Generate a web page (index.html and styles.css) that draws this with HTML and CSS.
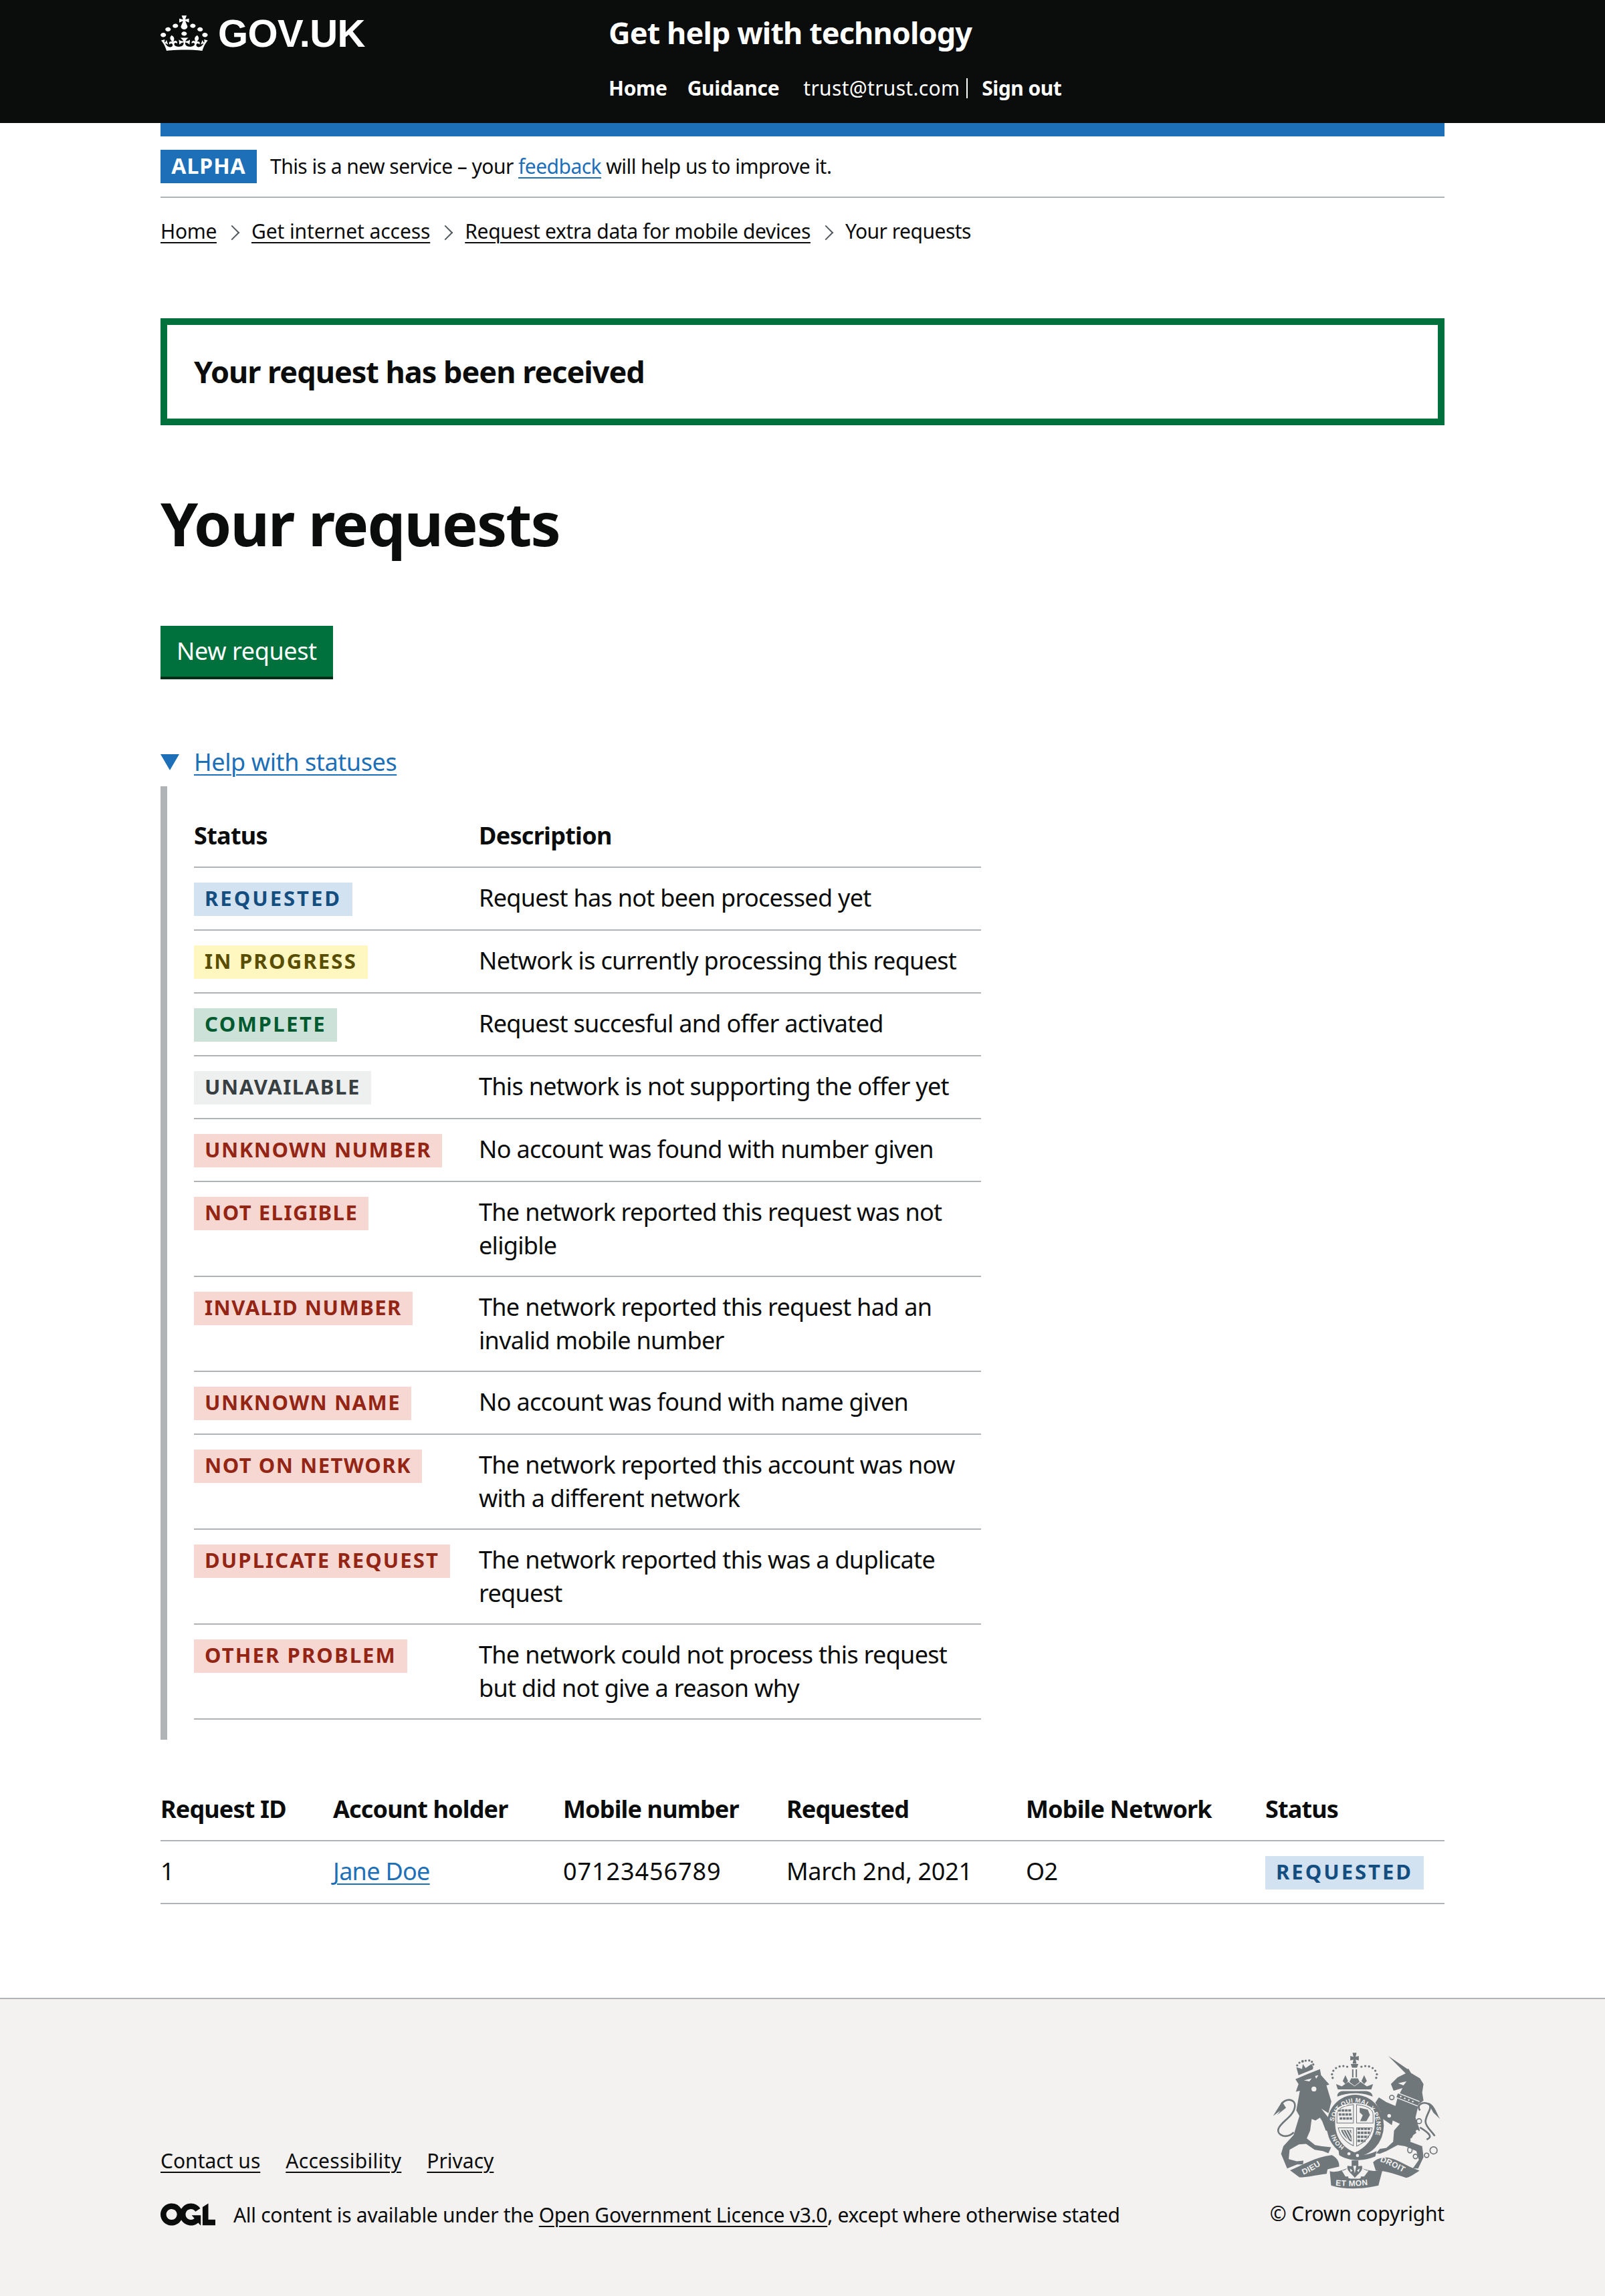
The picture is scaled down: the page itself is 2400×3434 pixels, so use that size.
FILE: index.html
```html
<!DOCTYPE html>
<html lang="en">
<head>
<meta charset="utf-8">
<title>Your requests - Get help with technology</title>
<link rel="stylesheet" href="styles.css">
</head>
<body>
<header class="site-header">
  <div class="header-inner">
    <div class="header-logo">
      <svg class="crown" viewBox="0 -0.2 32.6 30.2" preserveAspectRatio="none" aria-hidden="true"><path fill="#fff" fill-rule="evenodd" d="M22.6 10.4c-1 .4-2-.1-2.4-1-.4-.9.1-2 1-2.4.9-.4 2 .1 2.4 1s-.1 2-1 2.4m-5.9 6.7c-.9.4-2-.1-2.4-1-.4-.9.1-2 1-2.4.9-.4 2 .1 2.4 1s-.1 2-1 2.4m10.8-3.7c-1 .4-2-.1-2.4-1-.4-.9.1-2 1-2.4.9-.4 2 .1 2.4 1s0 2-1 2.4m3.3 4.8c-1 .4-2-.1-2.4-1-.4-.9.1-2 1-2.4.9-.4 2 .1 2.4 1s-.1 2-1 2.4M17 4.7l2.3 1.2V2.5l-2.3.7-.2-.2.9-3h-3.4l.9 3-.2.2c-.1.1-2.3-.7-2.3-.7v3.4L15 4.7c.1.1.1.2.2.2l-1.3 4c-.1.2-.1.4-.1.6 0 1.1.8 2 1.9 2.2h.7c1-.2 1.9-1.1 1.9-2.2 0-.2 0-.4-.1-.6l-1.3-4c-.1-.1 0-.2.1-.2m-7.6 5.7c.9.4 2-.1 2.4-1 .4-.9-.1-2-1-2.4-.9-.4-2 .1-2.4 1s0 2 1 2.4m-5 3c.9.4 2-.1 2.4-1 .4-.9-.1-2-1-2.4-.9-.4-2 .1-2.4 1s.1 2 1 2.4m-3.2 4.8c.9.4 2-.1 2.4-1 .4-.9-.1-2-1-2.4-.9-.4-2 .1-2.4 1s0 2 1 2.4m14.8 11c4.4 0 8.6.3 12.3.8 1.1-4.5 2.4-7 3.7-8.8l-2.5-.9c.2 1.3.3 1.9 0 2.7-.4-.4-.8-1.1-1.1-2.3l-1.2 4c.7-.5 1.3-.8 2-.9-1.1 2.5-2.6 3.1-3.5 3-1.1-.2-1.7-1.2-1.5-2.1.3-1.2 1.5-1.5 2.1-.1 1.1-2.3-.8-3-2-2.3 1.9-1.9 2.1-3.5.6-5.6-2.1 1.6-2.1 3.2-1.2 5.5-1.2-1.4-3.2-.6-2.5 1.6.9-1.4 2.1-.5 1.9.8-.2 1.1-1.7 2.1-3.5 1.9-2.7-.2-2.9-2.1-2.9-3.6.7-.1 1.9.5 2.9 1.9l.4-4.3c-1.1 1.1-2.1 1.4-3.2 1.4.4-1.2 2.1-3 2.1-3h-5.4s1.7 1.9 2.1 3c-1.1 0-2.1-.2-3.2-1.4l.4 4.3c1-1.4 2.2-2 2.9-1.9-.1 1.5-.2 3.4-2.9 3.6-1.9.2-3.4-.8-3.5-1.9-.2-1.3 1-2.2 1.9-.8.7-2.3-1.2-3-2.5-1.6.9-2.2.9-3.9-1.2-5.5-1.5 2-1.3 3.7.6 5.6-1.2-.7-3.1 0-2 2.3.6-1.4 1.8-1.1 2.1.1.2.9-.3 1.9-1.5 2.1-.9.2-2.4-.5-3.5-3 .6 0 1.2.3 2 .9l-1.2-4c-.3 1.1-.7 1.9-1.1 2.3-.3-.8-.2-1.4 0-2.7l-2.5.9c1.3 1.9 2.7 4.3 3.7 8.8 3.7-.5 7.9-.8 12.3-.8"/></svg>
      <a class="logotype" href="#">GOV.UK</a>
    </div>
    <div class="header-content">
      <a class="service-name" href="#">Get help with technology</a>
      <nav class="header-nav">
        <a class="nav-link" href="#">Home</a>
        <a class="nav-link" href="#">Guidance</a>
        <span class="nav-user">trust@trust.com</span>
        <a class="nav-link nav-signout" href="#">Sign out</a>
      </nav>
    </div>
  </div>
</header>

<div class="page">
  <div class="phase-banner">
    <strong class="phase-tag">ALPHA</strong>
    <span class="phase-text">This is a new service – your <a class="link" href="#">feedback</a> will help us to improve it.</span>
  </div>

  <ol class="breadcrumbs">
    <li class="crumb"><a class="crumb-link" href="#">Home</a></li>
    <li class="crumb crumb-loose"><a class="crumb-link" href="#">Get internet access</a></li>
    <li class="crumb"><a class="crumb-link" href="#">Request extra data for mobile devices</a></li>
    <li class="crumb crumb-tight">Your requests</li>
  </ol>

  <main class="main">
    <div class="panel">Your request has been received</div>
    <h1 class="page-title">Your requests</h1>
    <a class="button" href="#">New request</a>

    <details class="details" open>
      <summary class="details-summary"><span class="details-link">Help with statuses</span></summary>
      <div class="details-body">
        <table class="table help-table">
          <thead>
            <tr><th class="cell help-col-1">Status</th><th class="cell">Description</th></tr>
          </thead>
          <tbody>
            <tr><td class="cell"><span class="tag tag-blue">Requested</span></td><td class="cell">Request has not been processed yet</td></tr>
            <tr><td class="cell"><span class="tag tag-yellow">In progress</span></td><td class="cell">Network is currently processing this request</td></tr>
            <tr><td class="cell"><span class="tag tag-green">Complete</span></td><td class="cell">Request succesful and offer activated</td></tr>
            <tr><td class="cell"><span class="tag tag-grey">Unavailable</span></td><td class="cell">This network is not supporting the offer yet</td></tr>
            <tr><td class="cell"><span class="tag tag-red">Unknown number</span></td><td class="cell">No account was found with number given</td></tr>
            <tr><td class="cell"><span class="tag tag-red">Not eligible</span></td><td class="cell">The network reported this request was not eligible</td></tr>
            <tr><td class="cell"><span class="tag tag-red">Invalid number</span></td><td class="cell">The network reported this request had an invalid mobile number</td></tr>
            <tr><td class="cell"><span class="tag tag-red">Unknown name</span></td><td class="cell">No account was found with name given</td></tr>
            <tr><td class="cell"><span class="tag tag-red">Not on network</span></td><td class="cell">The network reported this account was now with a different network</td></tr>
            <tr><td class="cell"><span class="tag tag-red tag-loose">Duplicate request</span></td><td class="cell">The network reported this was a duplicate request</td></tr>
            <tr><td class="cell"><span class="tag tag-red tag-loose">Other problem</span></td><td class="cell">The network could not process this request but did not give a reason why</td></tr>
          </tbody>
        </table>
      </div>
    </details>

    <table class="table requests-table">
      <thead>
        <tr>
          <th class="cell col-id">Request ID</th>
          <th class="cell col-name">Account holder</th>
          <th class="cell col-mobile">Mobile number</th>
          <th class="cell col-date">Requested</th>
          <th class="cell col-network">Mobile Network</th>
          <th class="cell col-status">Status</th>
        </tr>
      </thead>
      <tbody>
        <tr>
          <td class="cell">1</td>
          <td class="cell"><a class="link" href="#">Jane Doe</a></td>
          <td class="cell cell-num">07123456789</td>
          <td class="cell cell-date">March 2nd, 2021</td>
          <td class="cell">O2</td>
          <td class="cell"><span class="tag tag-blue">Requested</span></td>
        </tr>
      </tbody>
    </table>
  </main>
</div>

<footer class="footer">
  <div class="footer-inner">
    <div class="footer-meta">
      <ul class="footer-links">
        <li><a class="footer-link" href="#">Contact us</a></li>
        <li><a class="footer-link footer-link-loose" href="#">Accessibility</a></li>
        <li><a class="footer-link" href="#">Privacy</a></li>
      </ul>
      <div class="licence">
        <svg class="ogl" viewBox="0 0 483.2 195.7" aria-hidden="true"><path fill="#0b0c0c" d="M421.5 142.8V.1l-50.7 32.3v161.1h112.4v-50.7zm-122.3-9.6A47.12 47.12 0 0 1 221 97.8c0-26 21.1-47.1 47.1-47.1 16.7 0 31.4 8.7 39.7 21.8l42.7-27.2A97.63 97.63 0 0 0 268.1 0c-36.5 0-68.3 20.1-85.1 49.7A98 98 0 0 0 97.8 0C43.9 0 0 43.9 0 97.8s43.9 97.8 97.8 97.8c36.5 0 68.3-20.1 85.1-49.7a97.76 97.76 0 0 0 149.6 25.4l19.4 22.2h3v-87.8h-80l24.3 27.5zM97.8 145c-26 0-47.1-21.1-47.1-47.1s21.1-47.1 47.1-47.1 47.2 21 47.2 47S123.8 145 97.8 145"/></svg>
        <span class="licence-text">All content is available under the <a class="footer-link" href="#">Open Government Licence v3.0</a>, except where otherwise stated</span>
      </div>
    </div>
    <div class="copyright">
      <svg class="crest" viewBox="130 115 755 620" aria-hidden="true">
        <defs>
          <path id="garter-top" d="M404 430 A97 107 0 1 1 576 516"/>
          <path id="garter-low" d="M452 543 A97 107 0 0 1 404 462"/>
          <path id="rib-left" d="M268 668 C300 656 340 630 375 606"/>
          <path id="rib-mid" d="M412 716 Q495 724 584 710"/>
          <path id="rib-right" d="M610 608 C650 622 700 648 738 672"/>
        </defs>
        <g class="crest-art">
          <path d="M232 240 L290 215 L342 195 L347 222 L384 264 L371 268 L393 340 L380 392 L348 372 L378 410 L404 452 L398 478 L368 470 L352 428 L342 412 L322 425 L305 418 L298 470 L283 505 L320 535 L350 540 L392 545 L380 572 L355 562 L318 556 L280 530 L248 532 L206 556 L202 598 L238 608 L268 605 L266 622 L240 622 L195 640 L168 575 L178 540 L224 490 L250 405 L236 380 L252 292 L234 296 L246 262 Z"/>
          <path class="crest-line" d="M225 478 C190 510 150 490 155 465 C165 430 225 410 230 360 C232 330 195 322 170 350"/>
          <path d="M172 340 L132 405 L165 380 L150 400 L190 368 Z"/>
          <circle class="crest-bg" cx="315" cy="284" r="11"/>
          <path class="crest-bg" d="M270 245 L305 236 L295 250 Z M320 226 L335 222 L325 238 Z"/>
          <path d="M246 222 L236 186 L262 194 L265 172 L278 190 L304 172 L312 186 L310 196 Z"/>
          <circle cx="240" cy="178" r="5"/><circle cx="250" cy="166" r="5"/><circle cx="264" cy="160" r="6"/><circle cx="278" cy="157" r="5"/><circle cx="294" cy="156" r="5"/><circle cx="306" cy="162" r="5"/><circle cx="312" cy="174" r="5"/>

          <circle cx="399" cy="234" r="5"/><circle cx="396" cy="218" r="5"/><circle cx="402" cy="202" r="5"/><circle cx="414" cy="190" r="5"/><circle cx="430" cy="183" r="5"/><circle cx="447" cy="181" r="5"/><circle cx="464" cy="184" r="5"/><circle cx="528" cy="184" r="5"/><circle cx="545" cy="181" r="5"/><circle cx="562" cy="183" r="5"/><circle cx="578" cy="190" r="5"/><circle cx="590" cy="202" r="5"/><circle cx="597" cy="218" r="5"/><circle cx="594" cy="234" r="5"/>
          <path d="M488 122 H506 L502 140 L516 136 V156 L502 152 L506 170 H488 L492 152 L478 156 V136 L492 140 Z"/>
          <path d="M480 172 H514 L508 188 H486 Z M486 196 H492 V232 H486 Z M502 196 H508 V232 H502 Z"/>
          <path d="M482 236 H512 L520 252 L497 270 L474 252 Z"/>
          <path d="M456 222 L468 248 L456 262 L444 248 Z M540 222 L552 248 L540 262 L528 248 Z"/>
          <path d="M414 262 L440 272 L468 252 L497 272 L524 252 L552 272 L580 262 L572 286 H422 Z"/>
          <path d="M420 318 C418 302 430 294 445 293 H548 C564 294 578 302 578 318 C530 298 468 298 420 318 Z"/>

          <ellipse cx="500" cy="448" rx="128" ry="138"/>
          <path class="crest-bg" d="M410 400 C406 372 430 352 498 346 C566 352 590 372 588 400 V440 C586 496 556 545 498 568 C440 545 412 496 410 440 Z"/>
          <g class="crest-quarter">
            <path d="M418 398 C418 376 440 360 492 354 V436 H418 Z"/>
            <path d="M506 354 C556 360 580 376 580 398 V436 H506 Z"/>
            <path d="M424 458 H492 V538 C460 524 432 496 424 458 Z"/>
            <path d="M506 458 H576 C570 496 540 526 506 540 Z"/>
          </g>
          <path class="crest-bar" d="M424 380 H484 M426 398 H486 M430 416 H486"/>
          <path class="crest-bar" d="M510 462 H570 M510 480 H566 M510 498 H560 M510 516 H546"/>
          <path d="M520 368 L556 376 L566 400 L550 428 L522 428 L534 402 L520 388 Z"/>
          <path d="M436 468 H482 L484 520 C462 512 444 490 436 468 Z"/>
          <path class="crest-stripes" d="M446 470 L470 514 M458 468 L480 510 M470 466 L484 492"/>
          <text class="crest-text crest-garter"><textPath href="#garter-top">SOIT QUI MAL Y PENSE</textPath></text>
          <text class="crest-text crest-garter"><textPath href="#garter-low">HONI</textPath></text>

          <path d="M424 545 C470 585 530 592 596 562 L590 586 C530 612 468 606 428 580 Z"/>
          <circle class="crest-bg" cx="472" cy="574" r="7"/><circle class="crest-bg" cx="510" cy="582" r="7"/>

          <path d="M648 136 L735 195 L738 192 L750 212 L790 236 L806 262 L800 300 L806 336 L784 352 L770 412 L790 470 L760 490 L746 520 L800 540 L806 590 L782 640 L758 640 L785 602 L774 562 L724 540 L690 535 L640 562 L610 574 L594 572 L610 552 L640 548 L670 520 L674 470 L700 440 L668 425 L664 446 L644 432 L612 410 L614 385 L590 345 L606 322 L638 342 L680 360 L690 322 L712 280 L672 292 L660 262 L690 232 L726 214 Z"/>
          <path class="crest-collar-bg" d="M688 312 L784 350"/>
          <path class="crest-collar" d="M688 312 L784 350"/>
          <circle class="crest-bg" cx="704" cy="318" r="3.5"/><circle class="crest-bg" cx="722" cy="326" r="3.5"/><circle class="crest-bg" cx="740" cy="333" r="3.5"/><circle class="crest-bg" cx="758" cy="340" r="3.5"/>
          <circle class="crest-bg" cx="786" cy="428" r="9"/><circle class="crest-bg" cx="778" cy="474" r="7"/><circle class="crest-bg" cx="754" cy="510" r="7"/><circle class="crest-bg" cx="652" cy="404" r="9"/><circle class="crest-bg" cx="664" cy="322" r="9"/>
          <path class="crest-bg" d="M692 258 L730 250 L716 268 Z"/>
          <g class="crest-ring">
            <circle cx="664" cy="322" r="10"/><circle cx="652" cy="404" r="11"/><circle cx="786" cy="428" r="11"/>
            <ellipse cx="745" cy="557" rx="10" ry="13"/><circle cx="770" cy="586" r="10"/><circle cx="820" cy="581" r="10"/><circle cx="851" cy="559" r="16"/>
          </g>
          <path class="crest-line" d="M790 456 C830 480 850 500 820 510 M790 380 C770 350 810 340 830 352 C850 366 815 400 815 430 C815 455 850 480 856 495"/>
          <path d="M825 345 C855 350 865 395 880 418 L850 390 L838 368 Z"/>

          <path d="M208 648 C262 625 320 590 395 580 C418 590 430 612 428 632 L376 644 L372 664 C320 670 285 680 250 680 Z"/>
          <path d="M386 652 C410 660 440 648 462 640 L470 684 H524 L532 640 C560 648 590 660 624 640 L604 716 C530 734 450 734 392 716 Z"/>
          <path d="M580 612 C620 578 660 590 700 610 C730 626 760 640 788 650 C760 668 745 680 728 682 C690 670 640 650 592 650 Z"/>
          <path class="crest-bg" d="M440 650 C452 650 462 642 470 634 L476 686 H520 L526 634 C534 642 548 650 560 650 L540 676 H456 Z"/>
          <path d="M484 604 H514 V630 L530 628 C538 650 512 664 498 682 C486 664 458 650 466 628 L484 630 Z"/>
          <path class="crest-bg" d="M491 628 L505 628 L498 662 Z M476 640 L488 650 L480 656 Z M520 640 L508 650 L516 656 Z"/>
          <text class="crest-text crest-motto"><textPath href="#rib-left">DIEU</textPath></text>
          <text class="crest-text crest-motto"><textPath href="#rib-mid">ET MON</textPath></text>
          <text class="crest-text crest-motto"><textPath href="#rib-right">DROIT</textPath></text>
        </g>
      </svg>
      <a class="copyright-text" href="#">© Crown copyright</a>
    </div>
  </div>
</footer>
</body>
</html>
```
FILE: styles.css
```css
* { box-sizing: border-box; }
html, body { margin: 0; padding: 0; }
body {
  font-family: "Noto Sans", "Liberation Sans", sans-serif;
  font-size: 36px;
  line-height: 50px;
  color: #0b0c0c;
  background: #fff;
}

/* header */
.site-header { background: #0b0c0c; color: #fff; height: 184px; }
.header-inner { width: 1920px; margin: 0 auto; display: flex; }
.header-logo { width: 670px; display: flex; align-items: flex-start; padding-top: 23px; }
.crown { width: 72px; height: 53px; margin-right: 14px; flex: none; }
.logotype {
  font-family: "Liberation Sans", Arial, sans-serif;
  font-weight: 700;
  font-size: 58px;
  line-height: 58px;
  letter-spacing: -0.6px;
  color: #fff;
  text-decoration: none;
  margin-top: -2px;
}
.header-content { padding-top: 19px; }
.service-name {
  display: block;
  font-weight: 700;
  font-size: 45px;
  line-height: 60px;
  letter-spacing: -0.9px;
  color: #fff;
  text-decoration: none;
  white-space: nowrap;
}
.header-nav { display: flex; align-items: baseline; margin-top: 33px; font-size: 30px; line-height: 40px; letter-spacing: -0.3px; }
.nav-link { font-weight: 700; color: #fff; text-decoration: none; margin-right: 30px; white-space: nowrap; }
.nav-user { margin-left: 6px; padding-right: 10px; border-right: 2px solid #fff; line-height: 30px; white-space: nowrap; letter-spacing: 0.3px; }
.nav-signout { margin-left: 21px; margin-right: 0; letter-spacing: -0.5px; }

/* page */
.page { width: 1920px; margin: 0 auto; border-top: 20px solid #1d70b8; }
.phase-banner { display: flex; align-items: center; padding: 20px 0; border-bottom: 2px solid #b1b4b6; font-size: 30px; line-height: 50px; height: 92px; letter-spacing: -0.54px; }
.phase-tag { background: #1d70b8; color: #fff; font-size: 32px; height: 50px; line-height: 48px; width: 144px; text-align: center; letter-spacing: 1px; margin-right: 20px; flex: none; }
.link { color: #1d70b8; text-decoration: underline; text-decoration-thickness: 2px; text-underline-offset: 5px; }

.breadcrumbs { list-style: none; margin: 30px 0 0; padding: 0; display: flex; font-size: 30px; line-height: 40px; letter-spacing: -0.35px; }
.crumb { position: relative; margin-right: 52px; white-space: nowrap; }
.crumb-loose { letter-spacing: -0.1px; }
.crumb-tight { letter-spacing: -0.5px; }
.crumb + .crumb::before {
  content: "";
  position: absolute;
  left: -37px;
  top: 14px;
  width: 14px;
  height: 14px;
  border-top: 2px solid #505a5f;
  border-right: 2px solid #505a5f;
  transform: rotate(45deg);
}
.crumb-link { color: #0b0c0c; text-decoration: underline; text-decoration-thickness: 2px; text-underline-offset: 5px; }

.main { padding-top: 110px; }
.panel { border: 10px solid #00703c; height: 160px; padding: 40px 40px; font-weight: 700; font-size: 45px; line-height: 60px; letter-spacing: -1px; }
.page-title { font-size: 90px; line-height: 100px; font-weight: 700; margin: 96px 0 104px; letter-spacing: -1.85px; }

.button {
  display: block;
  height: 80px;
  padding: 0 24px;
  width: 258px;
  background: #00703c;
  border-bottom: 4px solid #002d18;
  color: #fff;
  font-size: 36px;
  line-height: 76px;
  letter-spacing: -0.4px;
  text-decoration: none;
  white-space: nowrap;
}

.details { margin-top: 97px; }
.details-summary { display: block; position: relative; padding-left: 50px; height: 50px; line-height: 54px; list-style: none; cursor: pointer; letter-spacing: -0.4px; }
.details-summary::-webkit-details-marker { display: none; }
.details-summary::before {
  content: "";
  position: absolute;
  left: 0;
  top: 15px;
  border-style: solid;
  border-width: 24px 14px 0 14px;
  border-color: #1d70b8 transparent transparent transparent;
}
.details-link { color: #1d70b8; text-decoration: underline; text-decoration-thickness: 2px; text-underline-offset: 5px; }
.details-body { margin-top: 13px; border-left: 10px solid #b1b4b6; padding: 30px 0 30px 40px; }

.table { border-collapse: separate; border-spacing: 0; table-layout: fixed; font-size: 36px; letter-spacing: -0.7px; }
.cell { padding: 20px 40px 20px 0; border-bottom: 2px solid #b1b4b6; text-align: left; vertical-align: top; line-height: 50px; }
th.cell { padding-top: 19px; padding-bottom: 21px; }
.cell:last-child { padding-right: 0; }
.cell-num { letter-spacing: 0.9px; }
.cell-date { letter-spacing: -0.3px; }
.help-table { width: 1177px; }
.help-col-1 { width: 426px; }
.requests-table th.cell { letter-spacing: -0.85px; }

.tag {
  display: inline-block;
  height: 50px;
  margin: 2px 0 0;
  padding: 0 16px;
  font-size: 31px;
  line-height: 46px;
  font-weight: 700;
  letter-spacing: 2px;
  text-transform: uppercase;
  vertical-align: top;
  white-space: nowrap;
}
.tag-blue { background: #d2e2f1; color: #144e81; letter-spacing: 3px; }
.tag-yellow { background: #fff7bf; color: #594d00; letter-spacing: 2.2px; }
.tag-green { background: #cce2d8; color: #005a30; letter-spacing: 2.5px; }
.tag-grey { background: #eeefef; color: #383f43; letter-spacing: 1.6px; }
.tag-red { background: #f6d7d2; color: #942514; letter-spacing: 1.5px; }
.tag-loose { letter-spacing: 2.1px; }

.requests-table { width: 1920px; margin-top: 60px; }
.col-id { width: 258px; }
.col-name { width: 344px; }
.col-mobile { width: 334px; }
.col-date { width: 358px; }
.col-network { width: 358px; }
.col-status { width: 268px; }

/* footer */
.footer { margin-top: 140px; background: #f3f2f1; border-top: 2px solid #b1b4b6; height: 446px; font-size: 30px; line-height: 40px; }
.footer-inner { width: 1920px; margin: 0 auto; display: flex; justify-content: space-between; align-items: flex-start; padding-top: 78px; }
.footer-meta { padding-top: 144px; }
.footer-links { list-style: none; margin: 0; padding: 0; display: flex; gap: 38px; }
.footer-link { color: #0b0c0c; text-decoration: underline; text-decoration-thickness: 2px; text-underline-offset: 5px; }
.footer-link-loose { letter-spacing: 0.3px; }
.licence { display: flex; align-items: flex-start; margin-top: 41px; }
.licence-text { letter-spacing: -0.3px; }
.ogl { width: 82px; height: 34px; margin: 2px 27px 0 0; flex: none; }
.copyright { display: flex; flex-direction: column; align-items: flex-end; }
.crest { width: 252px; height: 207px; margin-right: 5px; display: block; }
.copyright-text { color: #0b0c0c; text-decoration: none; margin-top: 16px; white-space: nowrap; letter-spacing: -0.2px; }
.crest-art { fill: #6f777b; stroke: none; }
.crest-bg { fill: #f3f2f1; }
.crest-line { fill: none; stroke: #6f777b; stroke-width: 8; }
.crest-ring { fill: none; stroke: #6f777b; stroke-width: 5; }
.crest-quarter { fill: none; stroke: #6f777b; stroke-width: 3; }
.crest-bar { fill: none; stroke: #6f777b; stroke-width: 11; stroke-dasharray: 12 3; }
.crest-stripes { fill: none; stroke: #f3f2f1; stroke-width: 4; }
.crest-collar-bg { fill: none; stroke: #f3f2f1; stroke-width: 26; }
.crest-collar { fill: none; stroke: #6f777b; stroke-width: 18; }
.crest-text { fill: #f3f2f1; font-family: "Liberation Sans", Arial, sans-serif; font-weight: 700; }
.crest-garter { font-size: 28px; letter-spacing: 1px; }
.crest-motto { font-size: 36px; letter-spacing: 1px; }
```
